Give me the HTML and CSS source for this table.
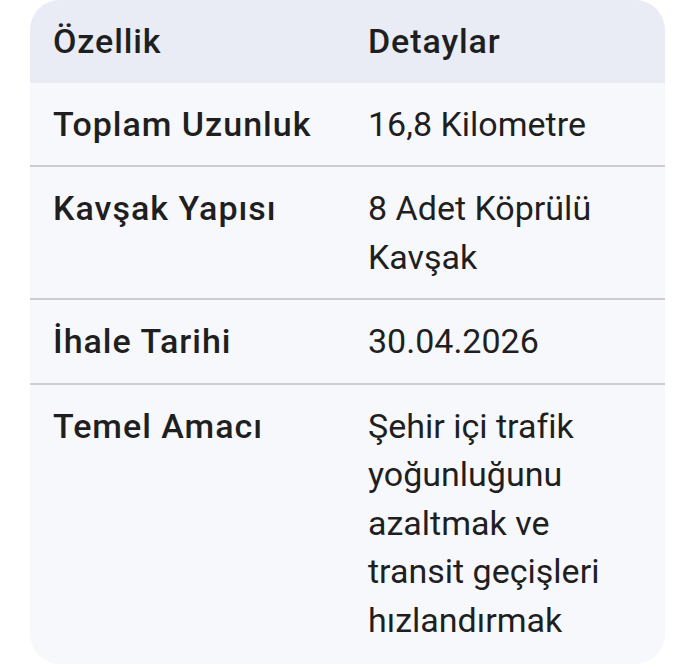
FILE: index.html
```html
<!DOCTYPE html>
<html lang="tr">
<head>
<meta charset="utf-8">
<link rel="stylesheet" href="styles.css">
</head>
<body>
<div class="card">
  <table class="spec">
    <thead>
      <tr><th>Özellik</th><th>Detaylar</th></tr>
    </thead>
    <tbody>
      <tr><td class="key">Toplam Uzunluk</td><td>16,8 Kilometre</td></tr>
      <tr><td class="key">Kavşak Yapısı</td><td>8 Adet Köprülü Kavşak</td></tr>
      <tr><td class="key">İhale Tarihi</td><td>30.04.2026</td></tr>
      <tr><td class="key">Temel Amacı</td><td>Şehir içi trafik yoğunluğunu azaltmak ve transit geçişleri hızlandırmak</td></tr>
    </tbody>
  </table>
</div>
</body>
</html>
```
FILE: styles.css
```css
html, body {
  margin: 0;
  padding: 0;
  background: #ffffff;
}
body {
  font-family: Roboto, "Noto Sans", sans-serif;
  color: #1f1f1f;
}
.card {
  margin: 0 35px 0 30px;
  height: 664px;
  border-radius: 30px;
  overflow: hidden;
  background: #f7f8fc;
}
.spec {
  width: 100%;
  border-collapse: collapse;
  table-layout: fixed;
  font-size: 34px;
  line-height: 48.5px;
}
.spec th, .spec td {
  text-align: left;
  vertical-align: top;
  padding: 17px 23px 17px;
}
.spec th:first-child, .spec td:first-child {
  width: 269px;
}
.spec thead tr {
  background: #e9ecf5;
}
.spec th {
  font-weight: 500;
  letter-spacing: 0.9px;
}
.spec tbody td {
  font-weight: 400;
}
.spec tbody td.key {
  font-weight: 500;
  letter-spacing: 1px;
}
.spec tbody tr + tr td {
  border-top: 2px solid #cdcdd0;
}
```
